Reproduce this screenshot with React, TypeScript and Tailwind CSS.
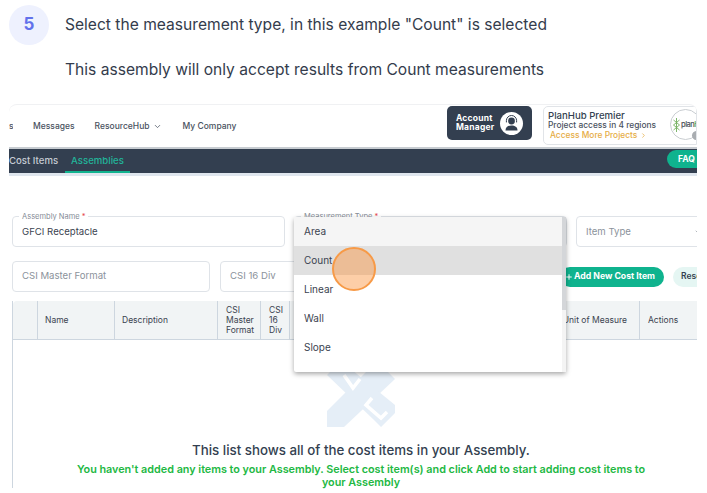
import { ChevronDown, ChevronRight, Plus } from 'lucide-react';

const options = ['Area', 'Count', 'Linear', 'Wall', 'Slope'];

function Field({ label, value, className }: { label?: string; value?: string; className: string }) {
  return (
    <div className={`relative flex items-center rounded border border-[#dfe3e8] bg-white px-[9px] text-[9.6px] ${className}`}>
      {label && (
        <span className="absolute -top-[5px] left-[6px] bg-white px-[3px] text-[7.5px] leading-[9px] text-[#858c96]">
          {label} <span className="text-[#e5484d]">*</span>
        </span>
      )}
      <span className={label ? 'text-[#3b4350]' : 'text-[#8b929b]'}>{value}</span>
    </div>
  );
}

function HeadCell({ className, children }: { className: string; children?: React.ReactNode }) {
  return (
    <div className={`flex shrink-0 items-center border-r border-[#cdd6df] text-[8.5px] leading-[10px] text-[#3b4350] ${className}`}>
      {children}
    </div>
  );
}

function Watermark() {
  return (
    <svg width="68" height="66" viewBox="0 0 68 66" className="mb-[15px] mt-[21px] shrink-0">
      <g fill="#e5eef7">
        <path d="M0 66 L0 50 L50 0 L68 18 L17 66 Z" />
        <path d="M0 14 L14 0 L68 44 L68 52 L54 66 L46 58 Z" />
      </g>
      <g fill="none" stroke="#ffffff" strokeWidth="3.5">
        <path d="M17 14 L26 27 L33 18" />
        <path d="M45 37 L39 44 L54 57 L60 51" />
      </g>
    </svg>
  );
}

export default function App() {
  return (
    <div className="h-[493px] w-[707px] overflow-hidden bg-white font-['Inter',sans-serif]">
      {/* Step header */}
      <div className="flex h-[104px] pl-[9px] pt-[5px]">
        <div className="flex h-[40px] w-[40px] shrink-0 items-center justify-center rounded-full bg-[#eef1fe] text-[17px] font-bold text-[#6271eb]">
          5
        </div>
        <div className="ml-[16px] pt-[11px] text-[15.6px] leading-[18px] text-[#343c4c]">
          <p>Select the measurement type, in this example "Count" is selected</p>
          <p className="mt-[27px]">This assembly will only accept results from Count measurements</p>
        </div>
      </div>

      {/* Embedded screenshot */}
      <div className="relative ml-[9px] h-[386px] w-[688px] overflow-hidden rounded-t-[8px] border-t border-[#f0f1f3]">
        {/* Top nav */}
        <div className="flex h-[42px] items-center text-[8.5px] font-medium text-[#4a5260]">
          <span className="w-[4px] overflow-hidden">s</span>
          <span className="ml-[20px]">Messages</span>
          <span className="ml-[20px] flex items-center gap-[3px]">
            ResourceHub <ChevronDown size={9} strokeWidth={2} />
          </span>
          <span className="ml-[21px]">My Company</span>

          <div className="ml-auto mt-[1px] flex h-[34px] w-[85px] items-center justify-between self-start rounded-[5px] bg-[#333f50] pl-[9px] pr-[9px] text-white">
            <span className="text-[8.5px] font-bold leading-[9.5px] tracking-[0.2px]">Account<br />Manager</span>
            <span className="flex h-[23px] w-[23px] items-center justify-center rounded-full bg-white">
              <svg width="15" height="16" viewBox="0 0 15 16">
                <circle cx="7.5" cy="6" r="3.4" fill="#333f50" />
                <path d="M1.5 15.5c0-3.6 2.6-5 6-5s6 1.4 6 5z" fill="#333f50" />
                <path d="M2.4 7.4V5.6a5.1 5.1 0 0 1 10.2 0V7.4" fill="none" stroke="#333f50" strokeWidth="1" />
              </svg>
            </span>
          </div>

          <div className="relative ml-[11px] mt-[1px] h-[39px] w-[154px] shrink-0 self-start overflow-hidden rounded-l-[5px] border border-[#e1e4e8] pl-[4px] pt-[4px]">
            <div className="text-[9.6px] font-medium leading-[10px] text-[#333f50]">PlanHub Premier</div>
            <div className="text-[8.4px] leading-[9px] text-[#4a5260]">Project access in 4 regions</div>
            <div className="ml-[2px] mt-[1px] flex items-center gap-[3px] text-[8.4px] font-medium leading-[9px] text-[#e6ad45]">
              Access More Projects <ChevronRight size={7} strokeWidth={2.5} />
            </div>
            <div className="absolute left-[126px] top-[2px] flex h-[31px] w-[31px] items-center rounded-full border border-[#c9cdd1] bg-white pl-[2px]">
              <svg width="7" height="14" viewBox="0 0 7 14" className="shrink-0">
                <path d="M3.5 0V14M0.5 2l6 5-6 5M6.5 2l-6 5 6 5" fill="none" stroke="#6fae5a" strokeWidth="0.9" />
              </svg>
              <span className="ml-[1px] whitespace-nowrap text-[7.5px] tracking-[-0.5px] text-[#444b55]">
                plan<span className="text-[#5fa24c]">Hu</span>
              </span>
              <span className="absolute left-[21px] top-[21px] h-[9px] w-[9px] rounded-full bg-[#a9adb1]" />
            </div>
          </div>
        </div>

        {/* Dark tab bar */}
        <div className="h-[2px] bg-[#c7ccd1]" />
        <div className="relative flex h-[24px] items-center bg-[#333f50] text-[9.6px] font-medium">
          <span className="text-[#c6ccd4]">Cost Items</span>
          <span className="relative ml-[13px] flex h-full items-center text-[#22b59a]">
            Assemblies
            <span className="absolute -left-[6px] -right-[6px] bottom-0 h-[2px] bg-[#12b48f]" />
          </span>
          <span className="absolute -right-[12px] top-[1px] flex h-[18px] w-[42px] items-center rounded-l-full bg-[#0fb38e] pl-[11px] text-[8.5px] font-bold text-white">
            FAQ
          </span>
        </div>
        <div className="h-[3px] bg-[#dfe6ee]" />

        {/* Form + table */}
        <div className="w-[700px] pl-[3px] pt-[40px]">
          <div className="flex gap-[9px]">
            <Field label="Assembly Name" value="GFCI Receptacle" className="h-[31px] w-[273px] shrink-0 pt-[2px]" />
            <Field label="Measurement Type" className="h-[31px] w-[273px] shrink-0" />
            <div className="relative flex h-[31px] w-[140px] shrink-0 items-center rounded border border-[#dfe3e8] px-[9px] pt-[2px] text-[9.6px] text-[#8b929b]">
              Item Type
              <ChevronDown size={8} className="absolute left-[117px] top-[11px]" />
            </div>
          </div>

          <div className="mt-[14px] flex items-center">
            <Field value="CSI Master Format" className="h-[31px] w-[198px] shrink-0" />
            <Field value="CSI 16 Div" className="ml-[10px] h-[31px] w-[200px] shrink-0" />
            <span className="ml-[140px] flex h-[20px] w-[104px] shrink-0 items-center gap-[1px] rounded-full bg-[#0fb38e] pl-[5px] text-[8.7px] font-bold text-white">
              <Plus size={8} strokeWidth={3} /> Add New Cost Item
            </span>
            <span className="ml-[9px] flex h-[20px] w-[60px] shrink-0 items-center rounded-full bg-[#e5f6f3] pl-[8px] text-[8.5px] font-semibold text-[#333f50]">
              Reset
            </span>
          </div>

          {/* Table */}
          <div className="mt-[9px] h-[187px] border-l border-[#cdd6df]">
            <div className="flex h-[39px] rounded-t-[4px] border-b border-[#cdd6df] bg-[#f1f4f5]">
              <HeadCell className="w-[25px]" />
              <HeadCell className="w-[77px] pl-[7px]">Name</HeadCell>
              <HeadCell className="w-[103px] pl-[7px]">Description</HeadCell>
              <HeadCell className="w-[43px] pl-[8px]">CSI<br />Master<br />Format</HeadCell>
              <HeadCell className="w-[29px] pl-[8px]">CSI<br />16<br />Div</HeadCell>
              <HeadCell className="w-[350px] justify-end pr-[12px]">Unit of Measure</HeadCell>
              <div className="flex items-center pl-[8px] text-[8.5px] text-[#3b4350]">Actions</div>
            </div>
            <div className="flex flex-col items-center">
              <Watermark />
              <p className="text-[13.3px] font-medium leading-[16px] text-[#333f50]">
                This list shows all of the cost items in your Assembly.
              </p>
              <p className="mt-[5px] w-[580px] text-center text-[10.8px] font-semibold leading-[13px] text-[#22b843]">
                You haven't added any items to your Assembly. Select cost item(s) and click Add to start adding cost items to your Assembly
              </p>
            </div>
          </div>
        </div>

        {/* Open select menu */}
        <div className="absolute left-[285px] top-[112px] flex h-[155px] w-[272px] rounded-[2px] bg-white shadow-[0_2px_5px_rgba(0,0,0,0.35)]">
          <div className="flex-1 text-[10px] text-[#3b4350]">
            {options.map((opt) => (
              <div
                key={opt}
                className={`flex h-[29px] items-center pl-[10px] ${
                  opt === 'Area' ? 'bg-[#f5f5f5]' : opt === 'Count' ? 'bg-[#e0e0e0]' : ''
                }`}
              >
                {opt}
              </div>
            ))}
          </div>
          <div className="w-[4px] bg-[#f4f4f4]">
            <div className="h-[93px] bg-[#d4d6d9]" />
          </div>
        </div>

        {/* Click marker */}
        <div className="absolute left-[323px] top-[142px] h-[44px] w-[44px] rounded-full border-2 border-[#f79a47] bg-[#fb923c]/45" />
      </div>
    </div>
  );
}
